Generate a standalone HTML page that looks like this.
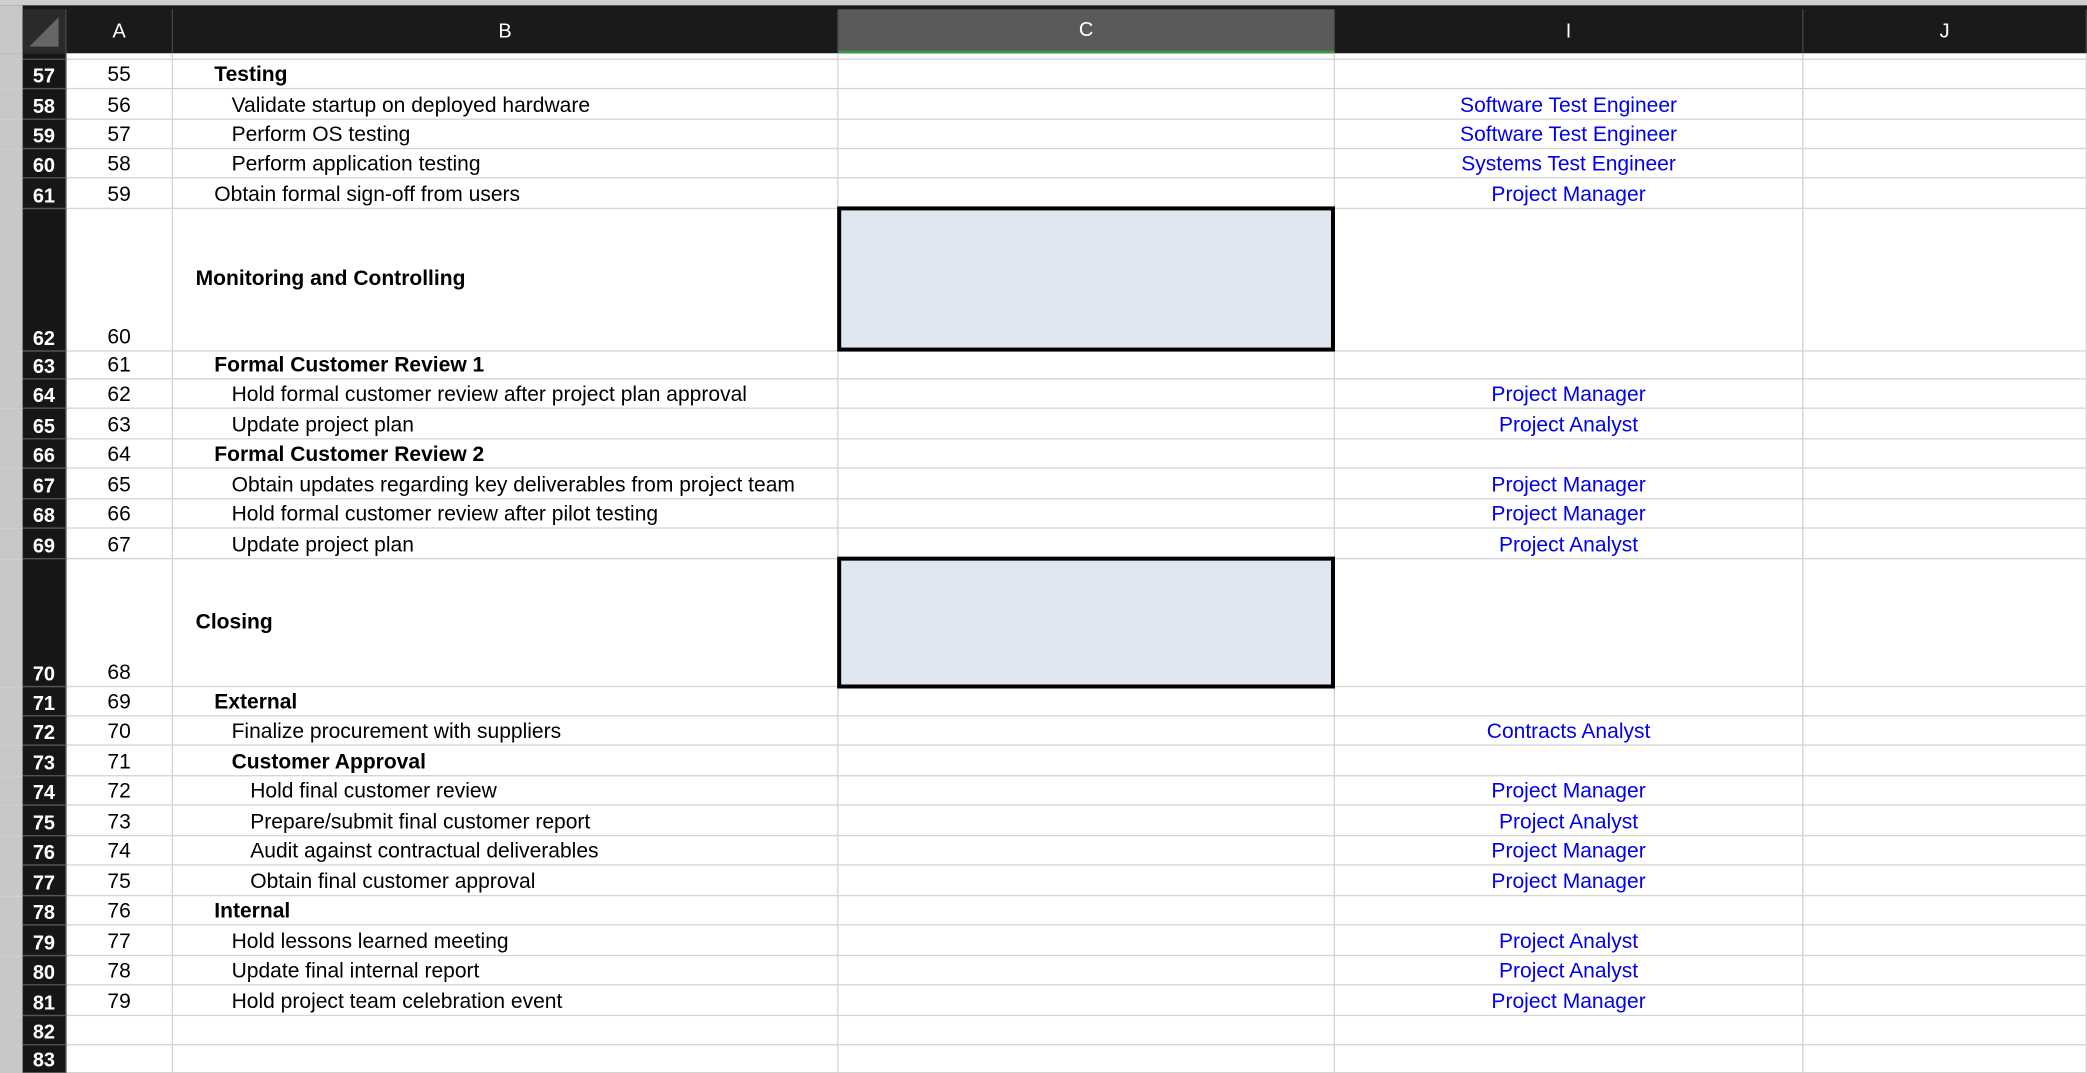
<!DOCTYPE html>
<html><head><meta charset="utf-8"><style>
html,body{margin:0;padding:0;background:#fff;overflow:hidden;width:2087px;height:1072px}
#w{position:absolute;left:0;top:0;width:1568px;height:806px;transform:scale(1.33099,1.3317);transform-origin:0 0;font-family:"Liberation Sans",Arial,sans-serif;font-size:15.8px;color:#000}
.r{position:absolute;left:0;width:1568px;display:flex}
.r>div{box-sizing:border-box;border-right:1px solid #d4d4d4;border-bottom:1px solid #d4d4d4;height:100%;display:flex;align-items:flex-end;padding-bottom:0;white-space:nowrap;overflow:visible}
.g{width:17px;background:#c8c8c8;border:none!important}
.h{width:33px;background:#161616;color:#fff;font-weight:bold;justify-content:center;border-right:1px solid #555!important;border-bottom:1px solid #555!important;font-size:15px}
.a{width:80px;justify-content:center}
.b{width:500px}
.c{width:373px}
.i{width:352px;justify-content:center;color:#0000ee}
.j{width:213px}
.bd{font-weight:bold}
.box{position:absolute;left:629px;width:374px;box-sizing:border-box;border:3px solid #000;background:#dfe6ef}
#hdr{position:absolute;left:0;top:0;width:1568px;height:40px;background:#1a1a1a}
.hc{position:absolute;top:7px;height:33px;color:#fff;font-size:15px;display:flex;align-items:center;justify-content:center;border-right:1px solid #444;box-sizing:border-box}
</style></head><body><div id="w">
<div id="hdr">
<div style="position:absolute;left:0;top:0;width:1568px;height:4px;background:#cfcfcf"></div>
<div style="position:absolute;left:0;top:4px;width:17px;height:36px;background:#c8c8c8"></div>
<div class="hc" style="left:17px;width:33px;background:#2a2a2a"><svg width="26" height="26" viewBox="0 0 26 26"><path d="M24 2 L24 24 L2 24 Z" fill="#666"/></svg></div>
<div class="hc" style="left:50px;width:80px">A</div>
<div class="hc" style="left:130px;width:500px">B</div>
<div class="hc" style="left:630px;width:373px;background:#5a5a5a;border-bottom:2px solid #3a9a4a">C</div>
<div class="hc" style="left:1003px;width:352px">I</div>
<div class="hc" style="left:1355px;width:213px">J</div>
</div>

<div class="r" style="top:40px;height:5px"><div class="g"></div><div class="h"></div><div class="a"></div><div class="b"></div><div class="c"></div><div class="i"></div><div class="j"></div></div>

<div class="r" style="top:45px;height:22px"><div class="g"></div><div class="h">57</div><div class="a">55</div><div class="b bd" style="padding-left:31px">Testing</div><div class="c"></div><div class="i"></div><div class="j"></div></div>
<div class="r" style="top:67px;height:23px"><div class="g"></div><div class="h">58</div><div class="a">56</div><div class="b" style="padding-left:44px">Validate startup on deployed hardware</div><div class="c"></div><div class="i">Software Test Engineer</div><div class="j"></div></div>
<div class="r" style="top:90px;height:22px"><div class="g"></div><div class="h">59</div><div class="a">57</div><div class="b" style="padding-left:44px">Perform OS testing</div><div class="c"></div><div class="i">Software Test Engineer</div><div class="j"></div></div>
<div class="r" style="top:112px;height:22px"><div class="g"></div><div class="h">60</div><div class="a">58</div><div class="b" style="padding-left:44px">Perform application testing</div><div class="c"></div><div class="i">Systems Test Engineer</div><div class="j"></div></div>
<div class="r" style="top:134px;height:23px"><div class="g"></div><div class="h">61</div><div class="a">59</div><div class="b" style="padding-left:31px">Obtain formal sign-off from users</div><div class="c"></div><div class="i">Project Manager</div><div class="j"></div></div>
<div class="r" style="top:157px;height:107px"><div class="g"></div><div class="h">62</div><div class="a">60</div><div class="b bd" style="padding-left:17px;align-items:center;padding-bottom:0">Monitoring and Controlling</div><div class="c"></div><div class="i"></div><div class="j"></div></div>
<div class="r" style="top:264px;height:21px"><div class="g"></div><div class="h">63</div><div class="a">61</div><div class="b bd" style="padding-left:31px">Formal Customer Review 1</div><div class="c"></div><div class="i"></div><div class="j"></div></div>
<div class="r" style="top:285px;height:22px"><div class="g"></div><div class="h">64</div><div class="a">62</div><div class="b" style="padding-left:44px">Hold formal customer review after project plan approval</div><div class="c"></div><div class="i">Project Manager</div><div class="j"></div></div>
<div class="r" style="top:307px;height:23px"><div class="g"></div><div class="h">65</div><div class="a">63</div><div class="b" style="padding-left:44px">Update project plan</div><div class="c"></div><div class="i">Project Analyst</div><div class="j"></div></div>
<div class="r" style="top:330px;height:22px"><div class="g"></div><div class="h">66</div><div class="a">64</div><div class="b bd" style="padding-left:31px">Formal Customer Review 2</div><div class="c"></div><div class="i"></div><div class="j"></div></div>
<div class="r" style="top:352px;height:23px"><div class="g"></div><div class="h">67</div><div class="a">65</div><div class="b" style="padding-left:44px">Obtain updates regarding key deliverables from project team</div><div class="c"></div><div class="i">Project Manager</div><div class="j"></div></div>
<div class="r" style="top:375px;height:22px"><div class="g"></div><div class="h">68</div><div class="a">66</div><div class="b" style="padding-left:44px">Hold formal customer review after pilot testing</div><div class="c"></div><div class="i">Project Manager</div><div class="j"></div></div>
<div class="r" style="top:397px;height:23px"><div class="g"></div><div class="h">69</div><div class="a">67</div><div class="b" style="padding-left:44px">Update project plan</div><div class="c"></div><div class="i">Project Analyst</div><div class="j"></div></div>
<div class="r" style="top:420px;height:96px"><div class="g"></div><div class="h">70</div><div class="a">68</div><div class="b bd" style="padding-left:17px;align-items:center;padding-bottom:0">Closing</div><div class="c"></div><div class="i"></div><div class="j"></div></div>
<div class="r" style="top:516px;height:22px"><div class="g"></div><div class="h">71</div><div class="a">69</div><div class="b bd" style="padding-left:31px">External</div><div class="c"></div><div class="i"></div><div class="j"></div></div>
<div class="r" style="top:538px;height:22px"><div class="g"></div><div class="h">72</div><div class="a">70</div><div class="b" style="padding-left:44px">Finalize procurement with suppliers</div><div class="c"></div><div class="i">Contracts Analyst</div><div class="j"></div></div>
<div class="r" style="top:560px;height:23px"><div class="g"></div><div class="h">73</div><div class="a">71</div><div class="b bd" style="padding-left:44px">Customer Approval</div><div class="c"></div><div class="i"></div><div class="j"></div></div>
<div class="r" style="top:583px;height:22px"><div class="g"></div><div class="h">74</div><div class="a">72</div><div class="b" style="padding-left:58px">Hold final customer review</div><div class="c"></div><div class="i">Project Manager</div><div class="j"></div></div>
<div class="r" style="top:605px;height:23px"><div class="g"></div><div class="h">75</div><div class="a">73</div><div class="b" style="padding-left:58px">Prepare/submit final customer report</div><div class="c"></div><div class="i">Project Analyst</div><div class="j"></div></div>
<div class="r" style="top:628px;height:22px"><div class="g"></div><div class="h">76</div><div class="a">74</div><div class="b" style="padding-left:58px">Audit against contractual deliverables</div><div class="c"></div><div class="i">Project Manager</div><div class="j"></div></div>
<div class="r" style="top:650px;height:23px"><div class="g"></div><div class="h">77</div><div class="a">75</div><div class="b" style="padding-left:58px">Obtain final customer approval</div><div class="c"></div><div class="i">Project Manager</div><div class="j"></div></div>
<div class="r" style="top:673px;height:22px"><div class="g"></div><div class="h">78</div><div class="a">76</div><div class="b bd" style="padding-left:31px">Internal</div><div class="c"></div><div class="i"></div><div class="j"></div></div>
<div class="r" style="top:695px;height:23px"><div class="g"></div><div class="h">79</div><div class="a">77</div><div class="b" style="padding-left:44px">Hold lessons learned meeting</div><div class="c"></div><div class="i">Project Analyst</div><div class="j"></div></div>
<div class="r" style="top:718px;height:22px"><div class="g"></div><div class="h">80</div><div class="a">78</div><div class="b" style="padding-left:44px">Update final internal report</div><div class="c"></div><div class="i">Project Analyst</div><div class="j"></div></div>
<div class="r" style="top:740px;height:23px"><div class="g"></div><div class="h">81</div><div class="a">79</div><div class="b" style="padding-left:44px">Hold project team celebration event</div><div class="c"></div><div class="i">Project Manager</div><div class="j"></div></div>
<div class="r" style="top:763px;height:22px"><div class="g"></div><div class="h">82</div><div class="a"></div><div class="b"></div><div class="c"></div><div class="i"></div><div class="j"></div></div>
<div class="r" style="top:785px;height:21px"><div class="g"></div><div class="h">83</div><div class="a"></div><div class="b"></div><div class="c"></div><div class="i"></div><div class="j"></div></div>

<div class="box" style="top:155px;height:109px"></div>
<div class="box" style="top:418px;height:99px"></div>
</div></body></html>
